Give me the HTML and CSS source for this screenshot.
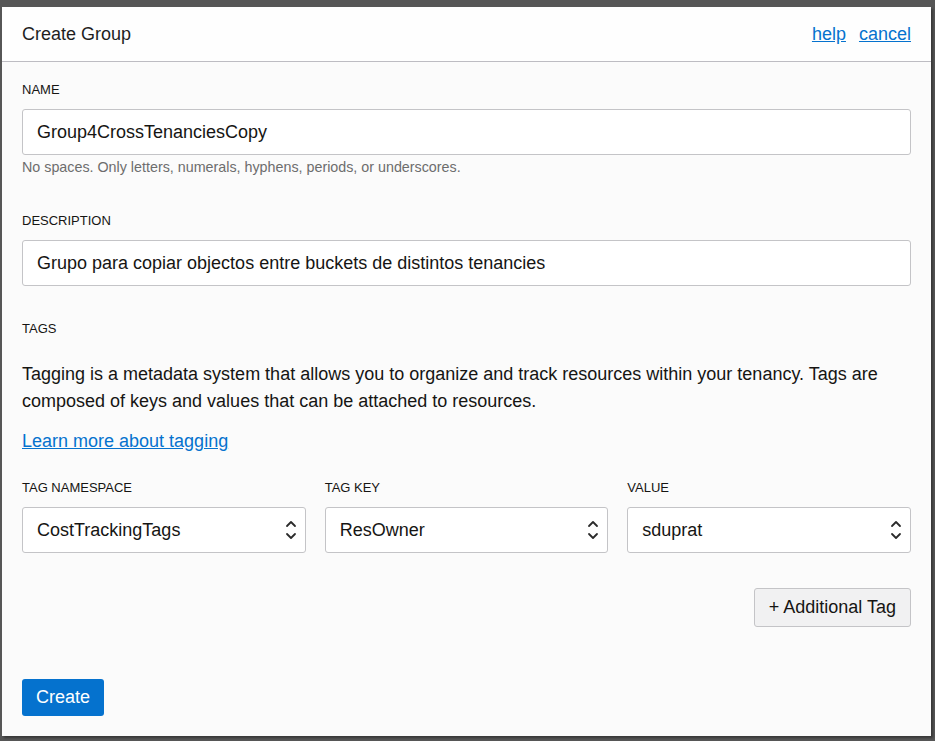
FILE: index.html
```html
<!DOCTYPE html>
<html lang="en">
<head>
<meta charset="utf-8">
<title>Create Group</title>
<link rel="stylesheet" href="styles.css">
</head>
<body>
<div class="dialog">
  <div class="dialog-header">
    <h1 class="dialog-title">Create Group</h1>
    <div class="header-links">
      <a class="link" href="#">help</a>
      <a class="link" href="#">cancel</a>
    </div>
  </div>
  <div class="dialog-body">
    <div class="field">
      <label class="field-label">NAME</label>
      <div class="input">Group4CrossTenanciesCopy</div>
      <div class="hint">No spaces. Only letters, numerals, hyphens, periods, or underscores.</div>
    </div>
    <div class="field field-desc">
      <label class="field-label">DESCRIPTION</label>
      <div class="input">Grupo para copiar objectos entre buckets de distintos tenancies</div>
    </div>
    <div class="field field-tags">
      <label class="field-label">TAGS</label>
      <p class="tags-text">Tagging is a metadata system that allows you to organize and track resources within your tenancy. Tags are composed of keys and values that can be attached to resources.</p>
      <a class="link learn" href="#">Learn more about tagging</a>
    </div>
    <div class="tag-row">
      <div class="tag-col">
        <label class="field-label">TAG NAMESPACE</label>
        <div class="select"><span>CostTrackingTags</span>
          <svg class="chev" width="12" height="22" viewBox="0 0 12 22"><path d="M2 7 L6 3 L10 7 M2 15 L6 19 L10 15" fill="none" stroke="#2a2a2a" stroke-width="1.8" stroke-linecap="round" stroke-linejoin="round"/></svg>
        </div>
      </div>
      <div class="tag-col">
        <label class="field-label">TAG KEY</label>
        <div class="select"><span>ResOwner</span>
          <svg class="chev" width="12" height="22" viewBox="0 0 12 22"><path d="M2 7 L6 3 L10 7 M2 15 L6 19 L10 15" fill="none" stroke="#2a2a2a" stroke-width="1.8" stroke-linecap="round" stroke-linejoin="round"/></svg>
        </div>
      </div>
      <div class="tag-col">
        <label class="field-label">VALUE</label>
        <div class="select"><span>sduprat</span>
          <svg class="chev" width="12" height="22" viewBox="0 0 12 22"><path d="M2 7 L6 3 L10 7 M2 15 L6 19 L10 15" fill="none" stroke="#2a2a2a" stroke-width="1.8" stroke-linecap="round" stroke-linejoin="round"/></svg>
        </div>
      </div>
    </div>
    <div class="add-row">
      <button class="btn-secondary">+ Additional Tag</button>
    </div>
    <div class="footer">
      <button class="btn-primary">Create</button>
    </div>
  </div>
</div>
</body>
</html>
```
FILE: styles.css
```css
html, body {
  margin: 0;
  padding: 0;
}
body {
  background: #565656;
  font-family: "Liberation Sans", Arial, sans-serif;
  color: #161513;
  width: 935px;
  height: 741px;
  overflow: hidden;
}
.dialog {
  margin: 7px 0 0 2px;
  width: 929px;
  height: 729px;
  background: #fbfbfb;
  box-shadow: 2px 2px 2px rgba(0,0,0,0.35);
  display: flex;
  flex-direction: column;
}
.dialog-header {
  height: 54px;
  background: #fefefe;
  border-bottom: 1px solid #bdbcc2;
  display: flex;
  align-items: center;
  justify-content: space-between;
  padding: 0 20px 0 20px;
}
.dialog-title {
  margin: 0;
  font-size: 18px;
  font-weight: normal;
  color: #1e1e1e;
}
.header-links {
  display: flex;
  gap: 13px;
}
.link {
  color: #0572ce;
  font-size: 18px;
  text-decoration: underline;
}
.dialog-body {
  padding: 20px 20px 0 20px;
  display: flex;
  flex-direction: column;
}
.field-label {
  display: block;
  font-size: 13px;
  color: #161513;
  line-height: 16px;
}
.input {
  margin-top: 11px;
  height: 44px;
  box-sizing: content-box;
  border: 1px solid #c4c4c7;
  border-radius: 3px;
  background: #ffffff;
  font-size: 18px;
  line-height: 44px;
  padding: 0 14px;
  color: #161513;
}
.hint {
  margin-top: 4px;
  font-size: 14.3px;
  color: #6d6d6d;
  line-height: 16px;
}
.field-desc {
  margin-top: 38px;
}
.field-tags {
  margin-top: 35px;
  display: flex;
  flex-direction: column;
}
.tags-text {
  margin: 24px 0 0 0;
  font-size: 18px;
  line-height: 27px;
  color: #161513;
}
.learn {
  display: inline-block;
  margin-top: 15px;
  line-height: 22px;
  align-self: flex-start;
}
.tag-row {
  margin-top: 28px;
  display: grid;
  grid-template-columns: 1fr 1fr 1fr;
  gap: 19px;
}
.select {
  margin-top: 11px;
  height: 44px;
  border: 1px solid #c4c4c7;
  border-radius: 3px;
  background: #ffffff;
  font-size: 18px;
  display: flex;
  align-items: center;
  justify-content: space-between;
  padding: 0 8px 0 14px;
}
.chev {
  display: block;
}
.add-row {
  margin-top: 35px;
  display: flex;
  justify-content: flex-end;
}
.btn-secondary {
  font-family: "Liberation Sans", Arial, sans-serif;
  font-size: 18px;
  color: #161513;
  background: #f1f1f2;
  border: 1px solid #c4c4c7;
  border-radius: 3px;
  height: 39px;
  padding: 0 14px;
}
.footer {
  margin-top: 52px;
}
.btn-primary {
  font-family: "Liberation Sans", Arial, sans-serif;
  font-size: 18px;
  color: #ffffff;
  background: #0572ce;
  border: none;
  border-radius: 3px;
  height: 37px;
  padding: 0 14px;
}
```
